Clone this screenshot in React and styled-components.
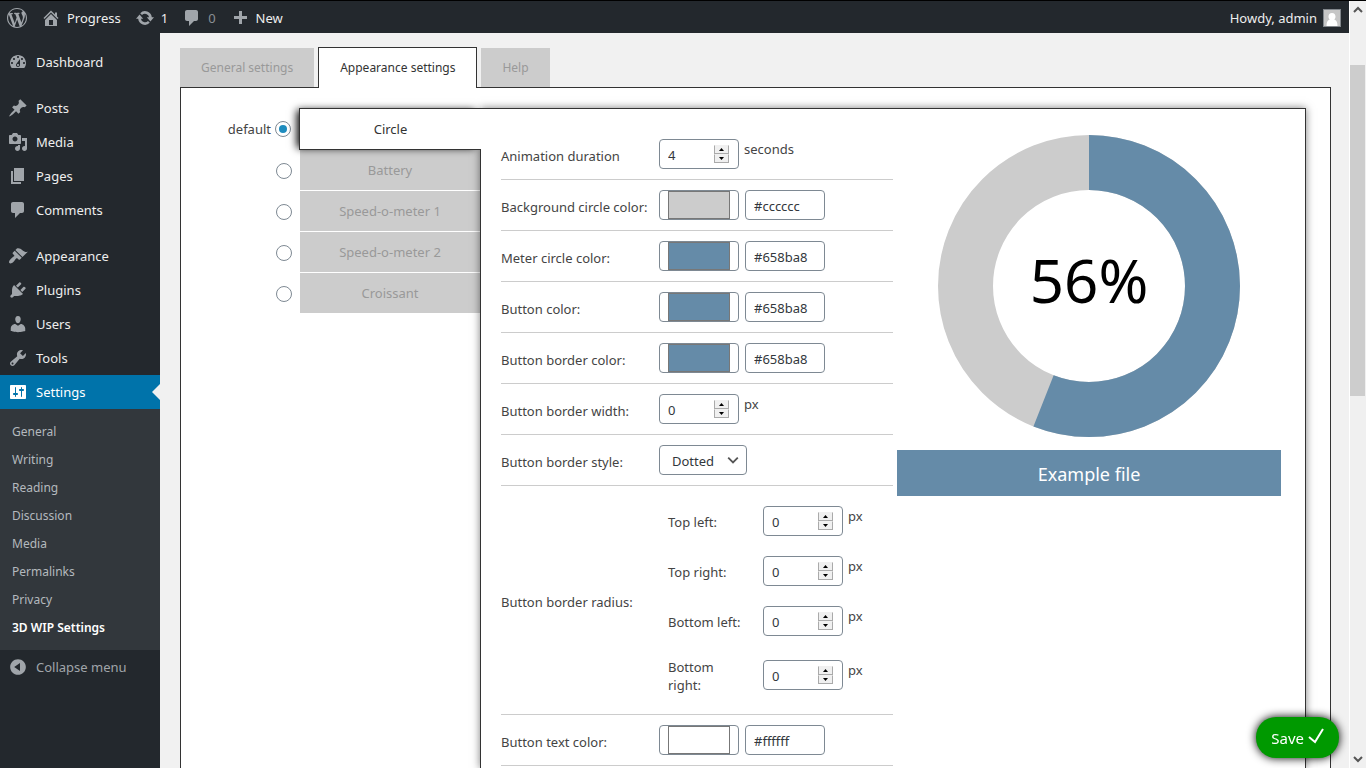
import React from 'react'
import styled, { createGlobalStyle, css } from 'styled-components'

const GlobalStyle = createGlobalStyle`
  *, *::before, *::after { box-sizing: border-box; }
  body {
    margin: 0;
    background: #f1f1f1;
    color: #444;
    font-family: 'Noto Sans', 'Open Sans', sans-serif;
    font-size: 13px;
    line-height: 18px;
  }
  button, input, select { font: inherit; color: inherit; margin: 0; }
  a { color: inherit; text-decoration: none; }
`

const Window = styled.div`
  display: flex;
  height: 100vh;
  overflow: hidden;
  border-top: 1px solid #000;
`

const Screen = styled.div`
  flex: 1;
  min-width: 0;
  display: flex;
  flex-direction: column;
`

/* ---------- admin bar ---------- */

const AdminBar = styled.header`
  flex: none;
  display: flex;
  align-items: center;
  gap: 14px;
  height: 32px;
  padding: 0 8px 0 7px;
  background: #23282d;
  color: #eee;
`

const BarLink = styled.a`
  display: flex;
  align-items: center;
  gap: 6px;
  padding-top: 2px;
  color: ${p => p.$dim ? '#8a8f94' : '#eee'};
`

const Account = styled(BarLink)`
  margin-left: auto;
`

const Avatar = styled.svg`
  width: 18px;
  height: 18px;
  border: 1px solid #82878c;
  background: #c6c6c6;
`

const IconSvg = styled.svg`
  flex: none;
  width: 20px;
  height: 20px;
  fill: ${p => p.$color || '#a0a5aa'};
`

/* ---------- side menu ---------- */

const Body = styled.div`
  flex: 1;
  min-height: 0;
  display: flex;
`

const SideMenu = styled.nav`
  flex: none;
  width: 160px;
  padding-top: 12px;
  background: #23282d;
`

const MenuGroup = styled.div`
  margin-bottom: ${p => p.$last ? 0 : 12}px;
`

const MenuLink = styled.a`
  position: relative;
  display: flex;
  align-items: center;
  gap: 8px;
  height: 34px;
  padding-left: 8px;
  color: ${p => p.$dim ? '#a0a5aa' : '#eee'};
  ${p => p.$current && css`
    background: #0073aa;
    color: #fff;
    &::after {
      content: '';
      position: absolute;
      top: 9px;
      right: 0;
      border: 8px solid transparent;
      border-left-width: 0;
      border-right-color: #f1f1f1;
    }
  `}
`

const SubMenu = styled.div`
  padding: 9px 0 8px;
  background: #32373c;
`

const SubLink = styled.a`
  display: block;
  padding: 5px 12px;
  font-size: 12px;
  color: #b4b9be;
  ${p => p.$current && css`
    color: #fff;
    font-weight: 600;
  `}
`

/* ---------- content ---------- */

const Content = styled.main`
  flex: 1;
  min-width: 0;
  display: flex;
  flex-direction: column;
  padding: 14px 18px 0 20px;
`

const Tabs = styled.div`
  display: flex;
  align-items: flex-end;
  gap: 4px;
  position: relative;
  z-index: 1;
`

const Tab = styled.button`
  height: 39px;
  padding: 0 21px;
  border: 0;
  background: #ccc;
  color: #999;
  font-size: 12px;
  ${p => p.$active && css`
    height: 41px;
    margin-bottom: -1px;
    border: 1px solid #333;
    border-bottom: 0;
    background: #fff;
    color: #333;
  `}
`

const Panel = styled.section`
  flex: 1 0 auto;
  display: flex;
  align-items: stretch;
  padding: 20px 24px 0 0;
  border: 1px solid #333;
  border-bottom: 0;
  background: #fff;
`

const StyleList = styled.div`
  flex: none;
  width: 299px;
`

const StyleRow = styled.div`
  display: flex;
`

const StyleDefault = styled.div`
  flex: 1;
  display: flex;
  align-items: center;
  justify-content: flex-end;
  gap: 4px;
  padding-right: 8px;
`

const Radio = styled.input`
  appearance: none;
  display: grid;
  place-items: center;
  width: 16px;
  height: 16px;
  border: 1px solid #7e8993;
  border-radius: 50%;
  background: #fff;
  &:checked::before {
    content: '';
    width: 8px;
    height: 8px;
    border-radius: 50%;
    background: #1e8cbe;
  }
`

const StyleTab = styled.button`
  width: 180px;
  height: 41px;
  border: 0;
  border-bottom: 1px solid #fff;
  background: #ccc;
  color: #999;
  ${p => p.$active && css`
    position: relative;
    z-index: 2;
    width: 182px;
    height: 42px;
    margin-right: -1px;
    border: 1px solid #333;
    border-right: 0;
    background: #fff;
    color: #333;
    box-shadow: -4px 0 8px -2px #000;
    clip-path: inset(-16px 0 -16px -16px);
  `}
`

const StylePanel = styled.div`
  position: relative;
  z-index: 1;
  flex: 1;
  min-width: 0;
  display: flex;
  gap: 4px;
  padding: 20px 24px 0 20px;
  border: 1px solid #333;
  border-bottom: 0;
  background: #fff;
  box-shadow: 0 0 8px rgba(0, 0, 0, 0.5);
`

const Form = styled.form`
  flex: none;
  width: 392px;
`

const FormRow = styled.div`
  display: flex;
  align-items: center;
  padding: 10px 0;
  border-bottom: 1px solid #ccc;
`

const Label = styled.label`
  flex: none;
  width: ${p => p.$nested ? 95 : 158}px;
  padding: ${p => p.$nested ? '2px 20px 0 0' : '4px 0 0'};
`

const Controls = styled.div`
  display: flex;
  gap: ${p => p.$gap || 6}px;
`

const Corners = styled.div`
  padding-left: 9px;
`

const CornerRow = styled.div`
  display: flex;
  align-items: center;
  padding: 10px 0;
`

const field = css`
  width: 80px;
  height: 30px;
  border: 1px solid #7e8993;
  border-radius: 4px;
  background: #fff;
  color: #32373c;
`

const NumberBox = styled.div`
  ${field}
  display: flex;
  align-items: center;
  padding: 0 9px 0 8px;
`

const NumberInput = styled.input`
  flex: 1;
  min-width: 0;
  padding: 1px 0 0;
  border: 0;
  outline: 0;
  background: none;
  appearance: textfield;
  &::-webkit-inner-spin-button { appearance: none; }
`

const Spinner = styled.div`
  display: flex;
  flex-direction: column;
`

const SpinButton = styled.button`
  display: grid;
  place-items: center;
  width: 15px;
  height: 9px;
  padding: 0;
  border: 1px solid #aaa;
  border-top-color: #f0f0f0;
  background: #f0f0f0;
`

const TextInput = styled.input`
  ${field}
  padding: 1px 8px 0;
`

const ColorInput = styled.input`
  ${field}
  appearance: none;
  padding: 0 8px;
  &::-webkit-color-swatch-wrapper { padding: 0; }
  &::-webkit-color-swatch { border: 1px solid #777; border-radius: 0; }
`

const Unit = styled.span`
  padding-top: 1px;
`

const SelectBox = styled.div`
  display: grid;
  align-items: center;
  > * { grid-area: 1 / 1; }
  > svg { justify-self: end; margin-right: 8px; pointer-events: none; }
`

const Select = styled.select`
  ${field}
  appearance: none;
  width: 88px;
  padding: 2px 24px 0 12px;
`

/* ---------- preview ---------- */

const Preview = styled.div`
  flex: 1;
  min-width: 0;
  display: flex;
  flex-direction: column;
  align-items: center;
  gap: 13px;
  padding-top: 6px;
`

const Donut = styled.div`
  display: grid;
  place-items: center;
  > * { grid-area: 1 / 1; }
`

const Percent = styled.span`
  padding-bottom: 12px;
  font-size: 60px;
  line-height: 70px;
  color: #000;
`

const ExampleButton = styled.button`
  align-self: stretch;
  height: 46px;
  padding: 3px 6px 1px;
  border: 0;
  background: #658ba8;
  color: #fff;
  font-size: 18px;
`

const SaveButton = styled.button`
  position: fixed;
  right: 27px;
  bottom: 10px;
  z-index: 3;
  display: flex;
  align-items: center;
  gap: 4px;
  height: 41px;
  padding: 0 14px 0 15px;
  border: 0;
  border-radius: 20px;
  background: #090;
  color: #fff;
  font-size: 15px;
  box-shadow: 0 0 10px #000;
  > svg { margin-bottom: 3px; }
`

/* ---------- page scroll bar ---------- */

const ScrollBar = styled.div`
  flex: none;
  display: flex;
  flex-direction: column;
  align-items: center;
  width: 17px;
  padding: 4px 0;
  border-left: 1px solid #fff;
  background: #f0f0f0;
`

const ScrollTrack = styled.div`
  flex: 1;
  width: 100%;
  padding-top: 50px;
`

const ScrollThumb = styled.div`
  width: 15px;
  height: 48%;
  background: #cdcdcd;
`

const ICONS = {
  wordpress: 'M20 10c0-5.51-4.49-10-10-10C4.48 0 0 4.49 0 10c0 5.52 4.48 10 10 10 5.51 0 10-4.48 10-10zM7.78 15.37L4.37 6.22c.55-.02 1.17-.08 1.17-.08.5-.06.44-1.13-.06-1.11 0 0-1.45.11-2.37.11-.18 0-.37 0-.58-.01C4.12 2.69 6.87 1.11 10 1.11c2.33 0 4.45.87 6.05 2.34-.68-.11-1.65.39-1.65 1.58 0 .74.45 1.36.9 2.1.35.61.55 1.36.55 2.46 0 1.49-1.4 5-1.4 5l-3.03-8.37c.54-.02.82-.17.82-.17.5-.05.44-1.25-.06-1.22 0 0-1.44.12-2.38.12-.87 0-2.33-.12-2.33-.12-.5-.03-.56 1.2-.06 1.22l.92.08 1.26 3.41zM17.41 10c.24-.64.74-1.87.43-4.25.7 1.29 1.05 2.71 1.05 4.25 0 3.29-1.73 6.24-4.4 7.78.97-2.59 1.94-5.2 2.92-7.78zM6.1 18.09C3.12 16.65 1.11 13.53 1.11 10c0-1.3.23-2.48.72-3.59C3.25 10.3 4.67 14.2 6.1 18.09zm4.03-6.63l2.58 6.98c-.86.29-1.76.45-2.71.45-.79 0-1.57-.11-2.29-.33.81-2.38 1.62-4.74 2.42-7.1z',
  home: 'M16 8.5l1.53 1.53-1.06 1.06L10 4.6l-6.47 6.49-1.06-1.06L10 2.5l4 4v-2h2v4zm-6-2.46l6 5.99V18H4v-5.97zM12 17v-5H8v5h4z',
  update: 'M5.200 5.200A6.800 6.800 0 0 1 16.800 9.300H19L15.400 13.400 11.800 9.300H14.100A4.200 4.200 0 0 0 7 7zM14.800 14.800A6.800 6.800 0 0 1 3.200 10.700H1L4.600 6.600 8.200 10.700H5.900A4.200 4.200 0 0 0 13 13z',
  plus: 'M17 8v3h-5v5H9v-5H4V8h5V3h3v5h5z',
  dashboard: 'M3.76 16h12.48c1.1-1.37 1.76-3.11 1.76-5 0-4.42-3.58-8-8-8s-8 3.58-8 8c0 1.89.66 3.63 1.76 5zM10 4c.55 0 1 .45 1 1s-.45 1-1 1-1-.45-1-1 .45-1 1-1zM6 6c.55 0 1 .45 1 1s-.45 1-1 1-1-.45-1-1 .45-1 1-1zm8 0c.55 0 1 .45 1 1s-.45 1-1 1-1-.45-1-1 .45-1 1-1zm-5.37 5.55L12 7v6c0 1.1-.9 2-2 2s-2-.9-2-2c0-.57.24-1.08.63-1.45zM4 10c.55 0 1 .45 1 1s-.45 1-1 1-1-.45-1-1 .45-1 1-1zm12 0c.55 0 1 .45 1 1s-.45 1-1 1-1-.45-1-1 .45-1 1-1zm-5 3c0-.55-.45-1-1-1s-1 .45-1 1 .45 1 1 1 1-.45 1-1z',
  post: 'M10.44 3.02l1.82-1.82 6.36 6.35-1.83 1.82c-1.05-.68-2.48-.57-3.41.36l-.75.75c-.92.93-1.04 2.35-.35 3.41l-1.83 1.82-2.41-2.41-2.8 2.79c-.42.42-3.38 2.71-3.8 2.29s1.86-3.39 2.28-3.81l2.79-2.79L4.1 9.36l1.83-1.82c1.05.69 2.48.57 3.4-.36l.75-.75c.93-.92 1.05-2.35.36-3.41z',
  media: 'M13 11V4c0-.55-.45-1-1-1h-1.67L9 1H5L3.67 3H2c-.55 0-1 .45-1 1v7c0 .55.45 1 1 1h10c.55 0 1-.45 1-1zM7 4.5c1.38 0 2.5 1.12 2.5 2.5S8.38 9.5 7 9.5 4.5 8.38 4.5 7 5.62 4.5 7 4.5zM14 6h5v10.5c0 1.38-1.12 2.5-2.5 2.5S14 17.88 14 16.5s1.12-2.5 2.5-2.5c.17 0 .34.02.5.05V9h-3V6zm-4 8.05V13h2v3.5c0 1.38-1.12 2.5-2.5 2.5S7 17.88 7 16.5 8.12 14 9.5 14c.17 0 .34.02.5.05z',
  page: 'M6 15V2h10v13H6zm-1 1h8v2H3V5h2v11z',
  comments: 'M5 2h9c1.1 0 2 .9 2 2v7c0 1.1-.9 2-2 2h-2l-5 5v-5H5c-1.1 0-2-.9-2-2V4c0-1.1.9-2 2-2z',
  appearance: 'M14.48 11.06L7.41 3.99l1.5-1.5c.5-.56 2.3-.47 3.51.32 1.21.8 1.43 1.28 2.91 2.1 1.18.64 2.45 1.26 4.45.85zm-.71.71L6.7 4.7 4.93 6.47c-.39.39-.39 1.02 0 1.41l1.06 1.06c.39.39.39 1.03 0 1.42-.6.6-1.43 1.11-2.21 1.69-.35.26-.7.53-1.01.84C1.43 14.23.4 16.08 1.4 17.07c.99 1 2.84-.03 4.18-1.36.31-.31.58-.66.85-1.02.57-.78 1.08-1.61 1.69-2.21.39-.39 1.02-.39 1.41 0l1.06 1.06c.39.39 1.02.39 1.41 0z',
  plugins: 'M13.11 4.36L9.87 7.6 8 5.73l3.24-3.24c.35-.34 1.05-.2 1.56.32.52.51.66 1.21.31 1.55zm-8 1.77l.91-1.12 9.01 9.01-1.19.84c-.71.71-2.63 1.16-3.82 1.16H6.14L4.9 17.26c-.59.59-1.54.59-2.12 0-.59-.58-.59-1.53 0-2.12l1.24-1.24v-3.88c0-1.13.4-3.19 1.09-3.89zm7.26 3.97l3.24-3.24c.34-.35 1.04-.21 1.55.31.52.51.66 1.21.31 1.55l-3.24 3.25z',
  users: 'M10 9.25c-2.27 0-2.73-3.44-2.73-3.44C7 4.02 7.82 2 9.97 2c2.16 0 2.98 2.02 2.71 3.81 0 0-.41 3.44-2.68 3.44zm0 2.57L12.72 10c2.39 0 4.52 2.33 4.52 4.53v2.49s-3.65 1.13-7.24 1.13c-3.65 0-7.24-1.13-7.24-1.13v-2.49c0-2.25 1.94-4.48 4.47-4.48z',
  tools: 'M16.68 9.77c-1.34 1.34-3.3 1.67-4.95.99l-5.41 6.52c-.99.99-2.59.99-3.58 0s-.99-2.59 0-3.57l6.52-5.42c-.68-1.65-.35-3.61.99-4.95 1.28-1.28 3.12-1.62 4.72-1.06l-2.89 2.89 2.82 2.82 2.86-2.87c.53 1.58.18 3.39-1.08 4.65zM3.81 16.21c.4.39 1.04.39 1.43 0 .4-.4.4-1.04 0-1.43-.39-.4-1.03-.4-1.43 0-.39.39-.39 1.03 0 1.43z',
  settings: 'M18 16V4c0-.55-.45-1-1-1H3c-.55 0-1 .45-1 1v12c0 .55.45 1 1 1h14c.55 0 1-.45 1-1zM8 11h1c.55 0 1 .45 1 1s-.45 1-1 1H8v1.5c0 .28-.22.5-.5.5s-.5-.22-.5-.5V13H6c-.55 0-1-.45-1-1s.45-1 1-1h1V5.5c0-.28.22-.5.5-.5s.5.22.5.5V11zm5-2h-1c-.55 0-1-.45-1-1s.45-1 1-1h1V5.5c0-.28.22-.5.5-.5s.5.22.5.5V7h1c.55 0 1 .45 1 1s-.45 1-1 1h-1v5.5c0 .28-.22.5-.5.5s-.5-.22-.5-.5V9z',
  collapse: 'M10 2.16c4.33 0 7.84 3.51 7.84 7.84s-3.51 7.84-7.84 7.84S2.16 14.33 2.16 10 5.71 2.16 10 2.16zm2 11.72V6.12L6.18 9.97z'
}

const MENU = [
  [['dashboard', 'Dashboard']],
  [['post', 'Posts'], ['media', 'Media'], ['page', 'Pages'], ['comments', 'Comments']],
  [['appearance', 'Appearance'], ['plugins', 'Plugins'], ['users', 'Users'], ['tools', 'Tools'], ['settings', 'Settings']]
]

const SUB_MENU = ['General', 'Writing', 'Reading', 'Discussion', 'Media', 'Permalinks', 'Privacy', '3D WIP Settings']

const STYLES = ['Circle', 'Battery', 'Speed-o-meter 1', 'Speed-o-meter 2', 'Croissant']

const COLORS = [
  ['bg', 'Background circle color:', '#cccccc'],
  ['meter', 'Meter circle color:', '#658ba8'],
  ['button', 'Button color:', '#658ba8'],
  ['border', 'Button border color:', '#658ba8']
]

const CORNERS = ['Top left:', 'Top right:', 'Bottom left:', 'Bottom right:']

function Icon ({ name, color }) {
  return (
    <IconSvg viewBox='0 0 20 20' $color={color} aria-hidden='true'>
      <path fillRule='evenodd' d={ICONS[name]} />
    </IconSvg>
  )
}

function Chevron ({ up, size = 10, weight = 2 }) {
  return (
    <svg width={size} height={size} viewBox='0 0 10 10' fill='none' stroke='#555' strokeWidth={weight} aria-hidden='true'>
      <path d={up ? 'M1 7l4-4 4 4' : 'M1 3l4 4 4-4'} />
    </svg>
  )
}

function NumberField ({ id, value, unit }) {
  return (
    <Controls $gap={5}>
      <NumberBox>
        <NumberInput id={id} type='number' defaultValue={value} />
        <Spinner>
          <SpinButton type='button' aria-label='Increase'>
            <svg width='5' height='3' viewBox='0 0 5 3'><path d='M0 3L2.5 0 5 3z' /></svg>
          </SpinButton>
          <SpinButton type='button' aria-label='Decrease'>
            <svg width='5' height='3' viewBox='0 0 5 3'><path d='M0 0l2.5 3L5 0z' /></svg>
          </SpinButton>
        </Spinner>
      </NumberBox>
      <Unit>{unit}</Unit>
    </Controls>
  )
}

function ColorRow ({ id, label, value }) {
  return (
    <FormRow>
      <Label htmlFor={id}>{label}</Label>
      <Controls>
        <ColorInput id={id} type='color' defaultValue={value} />
        <TextInput type='text' aria-label={label} defaultValue={value} />
      </Controls>
    </FormRow>
  )
}

function SettingsForm () {
  return (
    <Form>
      <FormRow>
        <Label htmlFor='duration'>Animation duration</Label>
        <NumberField id='duration' value={4} unit='seconds' />
      </FormRow>
      {COLORS.map(([id, label, value]) => <ColorRow key={id} id={id} label={label} value={value} />)}
      <FormRow>
        <Label htmlFor='border-width'>Button border width:</Label>
        <NumberField id='border-width' value={0} unit='px' />
      </FormRow>
      <FormRow>
        <Label htmlFor='border-style'>Button border style:</Label>
        <SelectBox>
          <Select id='border-style' defaultValue='Dotted'>
            <option>Dotted</option>
            <option>Dashed</option>
            <option>Solid</option>
          </Select>
          <Chevron size={12} weight={1.5} />
        </SelectBox>
      </FormRow>
      <FormRow>
        <Label as='span'>Button border radius:</Label>
        <Corners>
          {CORNERS.map((label, i) => (
            <CornerRow key={label}>
              <Label $nested htmlFor={`corner-${i}`}>{label}</Label>
              <NumberField id={`corner-${i}`} value={0} unit='px' />
            </CornerRow>
          ))}
        </Corners>
      </FormRow>
      <ColorRow id='text' label='Button text color:' value='#ffffff' />
    </Form>
  )
}

function Meter ({ percent }) {
  return (
    <Donut>
      <svg width='302' height='302' viewBox='0 0 302 302' fill='none' strokeWidth='55' aria-hidden='true'>
        <circle cx='151' cy='151' r='123.5' stroke='#ccc' />
        <circle
          cx='151' cy='151' r='123.5' stroke='#658ba8'
          pathLength='100' strokeDasharray={`${percent} 100`} transform='rotate(-90 151 151)'
        />
      </svg>
      <Percent>{percent}%</Percent>
    </Donut>
  )
}

export default function App () {
  return (
    <>
      <GlobalStyle />
      <Window>
        <Screen>
          <AdminBar>
            <BarLink href='#' aria-label='About WordPress'><Icon name='wordpress' /></BarLink>
            <BarLink href='#'><Icon name='home' />Progress</BarLink>
            <BarLink href='#'><Icon name='update' />1</BarLink>
            <BarLink href='#' $dim><Icon name='comments' />0</BarLink>
            <BarLink href='#'><Icon name='plus' />New</BarLink>
            <Account href='#'>
              Howdy, admin
              <Avatar viewBox='0 0 16 16' aria-hidden='true'>
                <path fill='#fff' d='M8 3c2.300 0 3.500 1.600 3.500 3.500 0 1.300-.5 2.300-1.300 3 2.200.9 3.300 2.500 3.300 6.500h-11c0-4 1.100-5.600 3.300-6.500-.8-.7-1.300-1.700-1.300-3C4.500 4.600 5.700 3 8 3z' />
              </Avatar>
            </Account>
          </AdminBar>

          <Body>
            <SideMenu>
              {MENU.map((group, i) => (
                <MenuGroup key={i} $last={i === MENU.length - 1}>
                  {group.map(([icon, text]) => (
                    <MenuLink key={text} href='#' $current={icon === 'settings'}>
                      <Icon name={icon} color={icon === 'settings' ? '#fff' : undefined} />{text}
                    </MenuLink>
                  ))}
                </MenuGroup>
              ))}
              <SubMenu>
                {SUB_MENU.map(text => (
                  <SubLink key={text} href='#' $current={text === '3D WIP Settings'}>{text}</SubLink>
                ))}
              </SubMenu>
              <MenuLink href='#' $dim><Icon name='collapse' />Collapse menu</MenuLink>
            </SideMenu>

            <Content>
              <Tabs>
                <Tab type='button'>General settings</Tab>
                <Tab type='button' $active>Appearance settings</Tab>
                <Tab type='button'>Help</Tab>
              </Tabs>
              <Panel>
                <StyleList>
                  {STYLES.map((text, i) => (
                    <StyleRow key={text}>
                      <StyleDefault>
                        {i === 0 && <label htmlFor='style-0'>default</label>}
                        <Radio id={`style-${i}`} type='radio' name='style' aria-label={text} defaultChecked={i === 0} />
                      </StyleDefault>
                      <StyleTab type='button' $active={i === 0}>{text}</StyleTab>
                    </StyleRow>
                  ))}
                </StyleList>
                <StylePanel>
                  <SettingsForm />
                  <Preview>
                    <Meter percent={56} />
                    <ExampleButton type='button'>Example file</ExampleButton>
                  </Preview>
                </StylePanel>
              </Panel>
            </Content>
          </Body>
        </Screen>

        <ScrollBar>
          <Chevron up />
          <ScrollTrack><ScrollThumb /></ScrollTrack>
          <Chevron />
        </ScrollBar>
      </Window>

      <SaveButton type='button'>
        Save
        <svg width='17' height='17' viewBox='0 0 17 17' fill='none' stroke='#fff' strokeWidth='2' aria-hidden='true'>
          <path d='M1 9l6 5L15 1' />
        </svg>
      </SaveButton>
    </>
  )
}
